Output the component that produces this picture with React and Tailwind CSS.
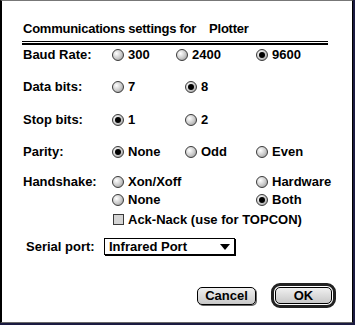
const font = { fontFamily: '"Liberation Sans", Arial, sans-serif' };

function Radio({ on, label, w }) {
  return (
    <div className={`flex items-center gap-[4px] ${w}`}>
      <span className="relative flex h-[12px] w-[12px] shrink-0 items-center justify-center rounded-full border border-[#3a3a3a] bg-[radial-gradient(circle_at_35%_35%,#ffffff,#c8c8c8_55%,#8a8a8a)]">
        {on && <span className="h-[6px] w-[6px] rounded-full bg-black" />}
      </span>
      <span>{label}</span>
    </div>
  );
}

function Row({ label, children, className = "" }) {
  return (
    <div className={`flex items-center ${className}`}>
      <div className="w-[89px] shrink-0">{label}</div>
      {children}
    </div>
  );
}

export default function App() {
  return (
    <div className="h-[325px] w-[355px] bg-[#1a1a40]" style={font}>
      <div className="flex h-[323px] w-[353px] flex-col border-b border-l-2 border-r border-t border-b-[#6a6a6a] border-l-black border-r-black border-t-[#777] bg-white pl-[21px] pr-[16px] text-[13px] font-bold leading-none text-black">
        <div className="mt-[21px] flex tracking-[-0.25px]">
          <span>Communications settings for</span>
          <span className="ml-[13px]">Plotter</span>
        </div>
        <div className="-ml-[1px] mr-[8px] mt-[6px] border-b-2 border-t border-black pt-[1px]" />

        <Row label="Baud Rate:" className="mt-[3px]">
          <Radio on={false} label="300" w="w-[64px]" />
          <Radio on={false} label="2400" w="w-[80px]" />
          <Radio on label="9600" />
        </Row>
        <Row label="Data bits:" className="mt-[19px]">
          <Radio on={false} label="7" w="w-[73px]" />
          <Radio on label="8" />
        </Row>
        <Row label="Stop bits:" className="mt-[20px]">
          <Radio on label="1" w="w-[73px]" />
          <Radio on={false} label="2" />
        </Row>
        <Row label="Parity:" className="mt-[19px]">
          <Radio on label="None" w="w-[73px]" />
          <Radio on={false} label="Odd" w="w-[71px]" />
          <Radio on={false} label="Even" />
        </Row>
        <Row label="Handshake:" className="mt-[17px]">
          <Radio on={false} label="Xon/Xoff" w="w-[144px]" />
          <Radio on={false} label="Hardware" />
        </Row>
        <div className="mt-[5px] flex pl-[89px]">
          <Radio on={false} label="None" w="w-[144px]" />
          <Radio on label="Both" />
        </div>
        <div className="mt-[7px] flex items-center gap-[4px] pl-[90px]">
          <span className="h-[11px] w-[11px] border border-[#3a3a3a] bg-[#d4d4d4]" />
          <span>Ack-Nack (use for TOPCON)</span>
        </div>

        <div className="mt-[12px] flex items-center pl-[3px]">
          <div className="w-[78px]">Serial port:</div>
          <div className="flex h-[17px] w-[131px] items-center justify-between border border-black pl-[4px] pr-[4px] shadow-[1px_1px_0_#000]">
            <span>Infrared Port</span>
            <svg width="10" height="6" viewBox="0 0 10 6">
              <path d="M0 0h10L5 6z" fill="#000" />
            </svg>
          </div>
        </div>

        <div className="mb-[14px] mt-auto flex items-center justify-end gap-[15px]">
          <button className="flex h-[18px] w-[59px] items-center justify-center rounded-[5px] border border-black bg-[linear-gradient(#f0f0f0,#c8c8c8)] shadow-[1px_1px_0_#666]">
            Cancel
          </button>
          <div className="rounded-[9px] border-[3px] border-[#222] p-[1px]">
            <button className="flex h-[17px] w-[57px] items-center justify-center rounded-[5px] border border-black bg-[linear-gradient(#f0f0f0,#c8c8c8)]">
              OK
            </button>
          </div>
        </div>
      </div>
    </div>
  );
}
